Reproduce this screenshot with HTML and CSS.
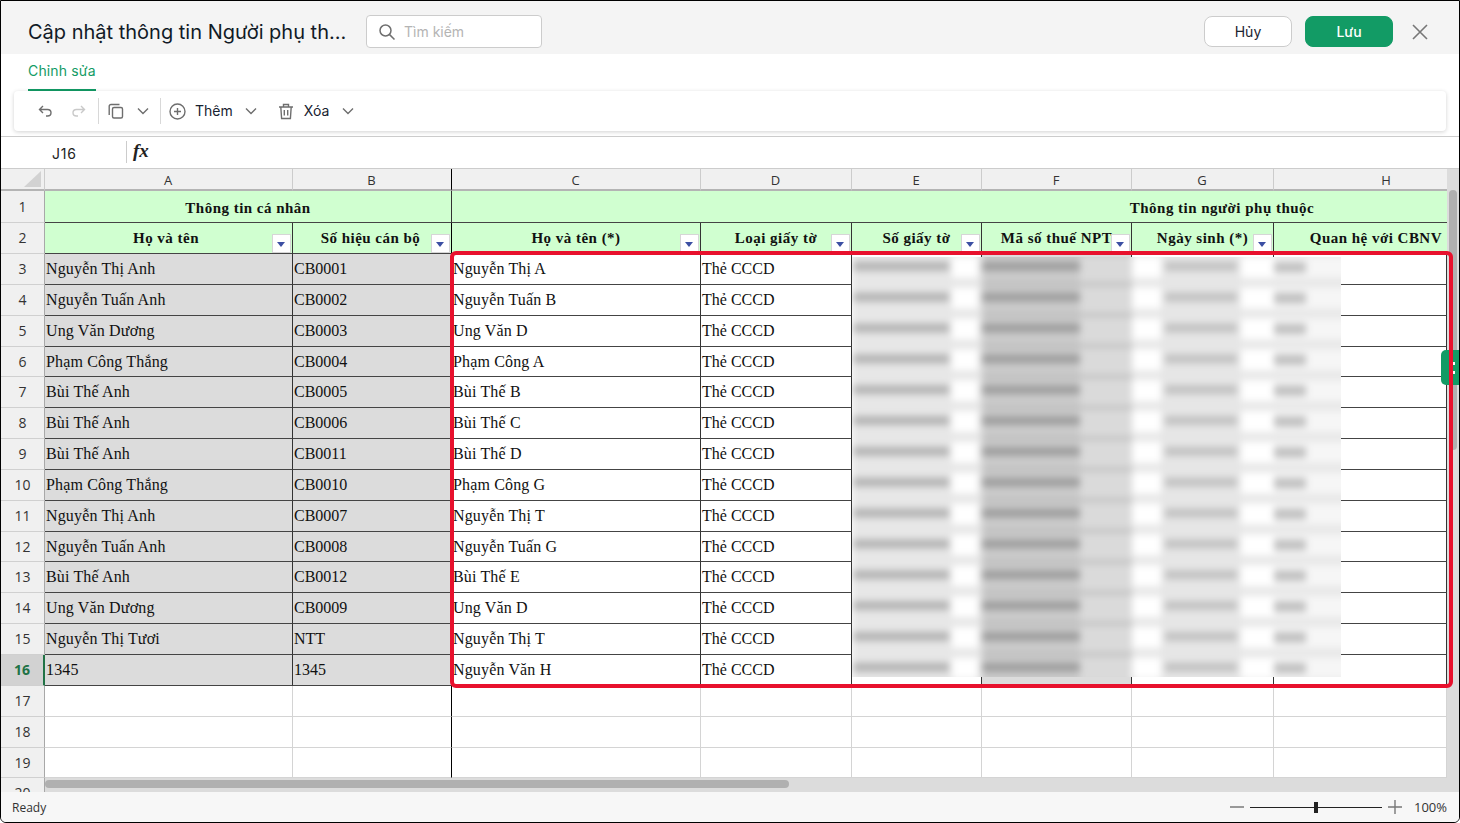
FILE: index.html
```html
<!DOCTYPE html>
<html lang="vi">
<head>
    <meta charset="utf-8" />
    <title>Cập nhật thông tin Người phụ thuộc</title>
    <link rel="stylesheet" href="styles.css">
</head>
<body>
<div class="app">
    <div class="topbar">
        <div class="title">Cập nhật thông tin Người phụ th...</div>
        <div class="search">
            <svg class="search-icon" width="18" height="18" viewBox="0 0 18 18"><circle cx="7.5" cy="7.5" r="5.5"/><path d="M11.6 11.6L16.5 16.5"/></svg>
            <span>Tìm kiếm</span>
        </div>
        <div class="topbar-actions">
            <div class="btn">Hủy</div>
            <div class="btn btn-save">Lưu</div>
            <svg class="close" width="16" height="16" viewBox="0 0 16 16"><path d="M1 1L15 15M15 1L1 15"/></svg>
        </div>
    </div>

    <div class="tabs"><div class="tab">Chỉnh sửa</div></div>

    <div class="toolbar-wrap">
        <div class="toolbar">
            <svg class="ico ico-undo" width="16" height="16" viewBox="0 0 16 16"><path d="M6 3L2.5 6.5L6 10M2.5 6.5H10.5C12.6 6.5 14 8 14 9.8C14 11.6 12.6 13 10.5 13H9"/></svg>
            <svg class="ico ico-redo" width="16" height="16" viewBox="0 0 16 16"><path d="M10 3L13.5 6.5L10 10M13.5 6.5H5.5C3.4 6.5 2 8 2 9.8C2 11.6 3.4 13 5.5 13H7"/></svg>
            <i class="sep"></i>
            <svg class="ico ico-copy" width="16" height="16" viewBox="0 0 16 16"><rect x="4.5" y="4.5" width="10" height="10.5" rx="1.5"/><path d="M11.5 1.5H3C2 1.5 1.2 2.3 1.2 3.3V12"/></svg>
            <svg class="ico chev chev-copy" width="12" height="12" viewBox="0 0 12 12"><path d="M1 3.5L6 8.5L11 3.5"/></svg>
            <i class="sep sep-2"></i>
            <svg class="ico ico-plus" width="17" height="17" viewBox="0 0 17 17"><circle cx="8.5" cy="8.5" r="7.5"/><path d="M8.5 5V12M5 8.5H12"/></svg>
            <span class="tool-label">Thêm</span>
            <svg class="ico chev chev-add" width="12" height="12" viewBox="0 0 12 12"><path d="M1 3.5L6 8.5L11 3.5"/></svg>
            <svg class="ico ico-trash" width="16" height="17" viewBox="0 0 16 17"><path d="M1 4H15M5.5 4V1.5H10.5V4M2.8 4L3.6 15.5H12.4L13.2 4M6.3 7V12.5M9.7 7V12.5"/></svg>
            <span class="tool-label">Xóa</span>
            <svg class="ico chev chev-del" width="12" height="12" viewBox="0 0 12 12"><path d="M1 3.5L6 8.5L11 3.5"/></svg>
        </div>
    </div>

    <div class="formula">
        <div class="cell-name">J16</div>
        <div class="fx">fx</div>
    </div>

    <div class="sheet">
        <div class="sheet-main">
            <table class="grid">
                <colgroup>
                    <col class="c-rh"><col class="c-a"><col class="c-b"><col class="c-c"><col class="c-d"><col class="c-e"><col class="c-f"><col class="c-g"><col class="c-h">
                </colgroup>
                <tr class="r-cols">
                    <th class="corner"><i></i></th><th>A</th><th class="freeze">B</th><th>C</th><th>D</th><th>E</th><th>F</th><th>G</th><th class="col-h">H</th>
                </tr>
                <tr class="r-32">
                    <td class="rh">1</td>
                    <td class="head head-top" colspan="2">Thông tin cá nhân</td>
                    <td class="head head-top head-dep" colspan="6">Thông tin người phụ thuộc</td>
                </tr>
                <tr>
                    <td class="rh">2</td>
                    <td class="head head-a">Họ và tên<b class="filter"></b></td>
                    <td class="head head-b">Số hiệu cán bộ<b class="filter"></b></td>
                    <td class="head">Họ và tên (*)<b class="filter"></b></td>
                    <td class="head">Loại giấy tờ<b class="filter"></b></td>
                    <td class="head">Số giấy tờ<b class="filter"></b></td>
                    <td class="head head-f">Mã số thuế NPT<b class="filter"></b></td>
                    <td class="head">Ngày sinh (*)<b class="filter"></b></td>
                    <td class="head head-h">Quan hệ với CBNV</td>
                </tr>
                <tr><td class="rh">3</td><td class="g">Nguyễn Thị Anh</td><td class="g">CB0001</td><td>Nguyễn Thị A</td><td>Thẻ CCCD</td><td></td><td class="g"></td><td></td><td></td></tr>
                <tr><td class="rh">4</td><td class="g">Nguyễn Tuấn Anh</td><td class="g">CB0002</td><td>Nguyễn Tuấn B</td><td>Thẻ CCCD</td><td></td><td class="g"></td><td></td><td></td></tr>
                <tr><td class="rh">5</td><td class="g">Ung Văn Dương</td><td class="g">CB0003</td><td>Ung Văn D</td><td>Thẻ CCCD</td><td></td><td class="g"></td><td></td><td></td></tr>
                <tr class="r-30"><td class="rh">6</td><td class="g">Phạm Công Thắng</td><td class="g">CB0004</td><td>Phạm Công A</td><td>Thẻ CCCD</td><td></td><td class="g"></td><td></td><td></td></tr>
                <tr><td class="rh">7</td><td class="g">Bùi Thế Anh</td><td class="g">CB0005</td><td>Bùi Thế B</td><td>Thẻ CCCD</td><td></td><td class="g"></td><td></td><td></td></tr>
                <tr><td class="rh">8</td><td class="g">Bùi Thế Anh</td><td class="g">CB0006</td><td>Bùi Thế C</td><td>Thẻ CCCD</td><td></td><td class="g"></td><td></td><td></td></tr>
                <tr><td class="rh">9</td><td class="g">Bùi Thế Anh</td><td class="g">CB0011</td><td>Bùi Thế D</td><td>Thẻ CCCD</td><td></td><td class="g"></td><td></td><td></td></tr>
                <tr><td class="rh">10</td><td class="g">Phạm Công Thắng</td><td class="g">CB0010</td><td>Phạm Công G</td><td>Thẻ CCCD</td><td></td><td class="g"></td><td></td><td></td></tr>
                <tr><td class="rh">11</td><td class="g">Nguyễn Thị Anh</td><td class="g">CB0007</td><td>Nguyễn Thị T</td><td>Thẻ CCCD</td><td></td><td class="g"></td><td></td><td></td></tr>
                <tr class="r-30"><td class="rh">12</td><td class="g">Nguyễn Tuấn Anh</td><td class="g">CB0008</td><td>Nguyễn Tuấn G</td><td>Thẻ CCCD</td><td></td><td class="g"></td><td></td><td></td></tr>
                <tr><td class="rh">13</td><td class="g">Bùi Thế Anh</td><td class="g">CB0012</td><td>Bùi Thế E</td><td>Thẻ CCCD</td><td></td><td class="g"></td><td></td><td></td></tr>
                <tr><td class="rh">14</td><td class="g">Ung Văn Dương</td><td class="g">CB0009</td><td>Ung Văn D</td><td>Thẻ CCCD</td><td></td><td class="g"></td><td></td><td></td></tr>
                <tr><td class="rh">15</td><td class="g">Nguyễn Thị Tươi</td><td class="g">NTT</td><td>Nguyễn Thị T</td><td>Thẻ CCCD</td><td></td><td class="g"></td><td></td><td></td></tr>
                <tr><td class="rh rh-active">16</td><td class="g">1345</td><td class="g">1345</td><td>Nguyễn Văn H</td><td>Thẻ CCCD</td><td></td><td class="g"></td><td></td><td></td></tr>
                <tr class="empty"><td class="rh">17</td><td></td><td></td><td></td><td></td><td></td><td></td><td></td><td></td></tr>
                <tr class="empty"><td class="rh">18</td><td></td><td></td><td></td><td></td><td></td><td></td><td></td><td></td></tr>
                <tr class="empty r-30"><td class="rh">19</td><td></td><td></td><td></td><td></td><td></td><td></td><td></td><td></td></tr>
            </table>
            <div class="vbar"><i></i></div>

            <div class="blur-box">
                <div class="blur-in">
                    <div class="bl bl-e"></div>
                    <div class="bl bl-f"></div>
                    <div class="bl bl-g"></div>
                    <div class="bl bl-h"></div>
                </div>
            </div>
            <div class="side-tab"><i></i><i></i></div>
            <div class="red-frame"></div>
        </div>
        <div class="hbar">
            <div class="hbar-rh"><span>20</span></div>
            <div class="hbar-track"><i></i></div>
        </div>
    </div>

    <div class="status">
        <span>Ready</span>
        <div class="zoom">
            <i class="zoom-minus"></i>
            <div class="zoom-track"><i></i></div>
            <svg class="zoom-plus" width="14" height="14" viewBox="0 0 14 14"><path d="M0 7H14M7 0V14"/></svg>
            <span class="zoom-val">100%</span>
        </div>
    </div>
</div>
</body>
</html>
```

FILE: styles.css
```css
* {box-sizing:border-box}
body {margin:0; background:#fff; font-family:Inter, "Noto Sans", sans-serif; color:#1c2430}
.app {width:1460px; height:823px; border:1px solid #000; border-radius:0 0 6px 6px; overflow:hidden; display:flex; flex-direction:column; background:#fff}

/* top bar */
.topbar {height:53px; flex:none; background:#f4f4f4; display:flex; align-items:center; padding:8px 31px 0 27px}
.title {width:338px; font-size:20px; white-space:nowrap; color:#111a26}
.search {width:176px; height:33px; background:#fff; border:1px solid #ccc; border-radius:4px; display:flex; align-items:center; padding-left:11px; gap:8px; font-size:14px; color:#b4b4b4}
.search-icon {fill:none; stroke:#6f6f6f; stroke-width:1.5}
.topbar-actions {margin-left:auto; display:flex; align-items:center; gap:13px}
.btn {width:88px; height:31px; background:#fff; border:1px solid #ccc; border-radius:8px; display:flex; align-items:center; justify-content:center; font-size:14px}
.btn-save {background:#129b65; border-color:#129b65; color:#fff; font-weight:500}
.close {margin-left:6px; fill:none; stroke:#777; stroke-width:1.6}

/* tab */
.tabs {height:37px; flex:none; padding-left:27px; display:flex; background:#fff}
.tab {width:68px; color:#129b65; font-size:14px; letter-spacing:.15px; white-space:nowrap; border-bottom:2px solid #129b65; padding-top:8px}

/* toolbar */
.toolbar-wrap {height:46px; flex:none; padding:0 13px; border-bottom:1px solid #ccc}
.toolbar {height:40px; background:#fff; border-radius:4px; box-shadow:0 1px 4px rgba(0,0,0,.18); display:flex; align-items:center; padding-left:23px; font-size:14px}
.ico {flex:none; fill:none; stroke:#6e6e6e; stroke-width:1.4}
.ico-redo {margin-left:18px; stroke:#c9c9c9}
.sep {width:1px; height:26px; background:#d8d8d8; margin-left:11px}
.ico-copy {margin-left:9px}
.chev-copy {margin-left:13px}
.sep-2 {margin-left:11px}
.ico-plus {margin-left:8px}
.tool-label {margin-left:9px; margin-bottom:2px; color:#172230}
.chev-add {margin-left:12px}
.ico-trash {margin-left:21px}
.ico-trash + .tool-label {margin-left:10px}
.chev-del {margin-left:13px}

/* formula bar */
.formula {height:32px; flex:none; display:flex; border-bottom:1px solid #ccc; background:#fff}
.cell-name {width:125px; padding:8px 0 0 51px; font-size:14px; letter-spacing:.8px; color:#222}
.fx {height:22px; margin-top:4px; border-left:1px solid #ccc; padding-left:6px; font:italic bold 19px/20px "Liberation Serif", serif; color:#222}

/* sheet */
.sheet {height:623px; flex:none; display:flex; flex-direction:column; overflow:hidden}
.sheet-main {height:609px; flex:none; display:flex; position:relative}
.grid {width:1446px; table-layout:fixed; border-collapse:separate; border-spacing:0; font:16px/1 "Liberation Serif", serif; color:#111}
.c-rh {width:44px}
.c-a {width:248px}
.c-b {width:159px}
.c-c {width:249px}
.c-d {width:151px}
.c-e {width:130px}
.c-f {width:150px}
.c-g {width:142px}
.c-h {width:173px}
.grid tr {height:31px}
.grid tr.r-cols {height:22px}
.grid tr.r-32 {height:32px}
.grid tr.r-30 {height:30px}
.grid th {height:22px; background:#f0f0f0; border-right:1px solid #ccc; border-bottom:2px solid #b4b4b4; font:400 13px/1 "Open Sans", sans-serif; color:#333; padding:2px 1px 0 0}
.grid th.freeze {border-right-color:#000}
.grid th.col-h {border-right:0; padding-left:52px}
.corner {position:relative}
.corner i {position:absolute; right:3px; bottom:2px; width:0; height:0; border-style:solid; border-width:0 0 16px 17px; border-color:transparent transparent #d2d2d2 transparent}
.grid td {padding:0 1px; white-space:nowrap; overflow:hidden; border-right:1px solid #333; border-bottom:1px solid #444; vertical-align:middle}
.grid td:nth-child(2), .grid td:nth-child(4) {letter-spacing:.15px}
.grid td:nth-child(3) {border-right-color:#000}
.grid td.rh {background:#f0f0f0; border-right:1px solid #a8a8a8; border-bottom:1px solid #d0d0d0; text-align:center; font:14px/1 "Open Sans", sans-serif; letter-spacing:0; color:#333}
.grid td.rh-active {background:#d2d2d2; color:#217346; font-weight:700; border-right:2px solid #217346}
.grid td.g {background:#dcdcdc}
.grid td.head {position:relative; background:#d0ffd0; text-align:center; font-weight:700; font-size:15px; letter-spacing:.48px; overflow:visible}
.grid td.head-top {padding-top:3px}
.grid td.head-a {padding-right:6px}
.grid td.head-b {padding-right:4px}
.grid td.head-dep {padding-left:546px; border-right:0}
.grid td.head-h {text-align:right; padding-right:5px; border-right:0}
.grid tr.empty td {border-right-color:#d4d4d4; border-bottom-color:#d4d4d4}
.grid tr.empty td:nth-child(3) {border-right-color:#000}
.grid tr.empty td.rh {border-right-color:#a8a8a8; border-bottom-color:#d0d0d0}
.filter {position:absolute; right:1px; bottom:0; width:19px; height:19px; background:#fff; border:1px solid #d6d6d6}
.filter::after {content:""; position:absolute; left:4px; top:7px; width:0; height:0; border-style:solid; border-width:5px 4.5px 0 4.5px; border-color:#3c4fa3 transparent transparent transparent}

/* scrollbars */
.vbar {width:12px; flex:none; background:#dcdcdc; padding:21px 0 0 2px}
.vbar i {display:block; width:8px; height:260px; border-radius:4px; background:#b0b0b0}
.hbar {height:14px; flex:none; display:flex}
.hbar-rh {width:44px; flex:none; background:#f0f0f0; border-right:1px solid #a8a8a8; overflow:hidden; text-align:center; font:14px/1 "Open Sans", sans-serif; color:#333; padding-top:8px}
.hbar-track {flex:1; background:#dcdcdc; padding-top:2px}
.hbar-track i {display:block; width:744px; height:8px; border-radius:4px; background:#b0b0b0}

/* overlays on the sheet */
.blur-box {position:absolute; left:851px; top:88px; width:489px; height:420px; overflow:hidden; background:#fff}
.blur-in {display:flex; margin-top:-30.85px; height:490px; width:510px; filter:blur(3.5px)}
.bl {flex:none; height:100%; background-size:100% 30.85px}
.bl-e {width:130px; background-color:#e7e7e7; background-repeat:repeat-y;
    background-image:linear-gradient(to bottom, transparent 5px, #b4b4b4 5px, #b4b4b4 14px, transparent 14px), linear-gradient(to bottom, #fff 21px, transparent 21px);
    background-size:96px 30.85px, 26px 30.85px; background-position:1px 0, 100px 0}
.bl-f {width:150px; background-color:#dadada; background-repeat:repeat-y;
    background-image:linear-gradient(to bottom, transparent 5px, #9e9e9e 5px, #9e9e9e 14px, transparent 14px), linear-gradient(to bottom, transparent 26px, #b8b8b8 26px, #b8b8b8 29px, transparent 29px), linear-gradient(#cbcbcb, #cbcbcb);
    background-size:98px 30.85px, 150px 30.85px, 98px 30.85px; background-position:0 0, 0 0, 0 0}
.bl-g {width:142px; background-color:#fff; background-repeat:repeat-y;
    background-image:linear-gradient(to bottom, transparent 5px, #c2c2c2 5px, #c2c2c2 14px, transparent 14px), linear-gradient(#e6e6e6, #e6e6e6), linear-gradient(to bottom, transparent 21px, #e8e8e8 21px);
    background-size:72px 30.85px, 80px 30.85px, 142px 30.85px; background-position:33px 0, 29px 0, 0 0}
.bl-h {width:88px; background-color:#f6f6f6; background-repeat:repeat-y;
    background-image:linear-gradient(to bottom, transparent 5px, #c2c2c2 5px, #c2c2c2 16px, transparent 16px), linear-gradient(to bottom, transparent 21px, #e8e8e8 21px);
    background-size:32px 30.85px, 88px 30.85px; background-position:0 0, 0 0}
.red-frame {position:absolute; left:449px; top:82px; width:1003px; height:437px; border:4px solid #e8112d; border-radius:6px; pointer-events:none}
.side-tab {position:absolute; left:1440px; top:181px; width:18px; height:35px; background:#129b65; border-radius:5px 0 0 5px; display:flex; flex-direction:column; align-items:flex-end; justify-content:center; gap:6px; padding-right:4px}
.side-tab i {width:3px; height:3px; background:#fff}

/* status bar */
.status {flex:1; background:#f7f7f7; display:flex; align-items:center; justify-content:space-between; padding:0 12px 0 11px; font:12px "Open Sans", sans-serif; color:#333}
.zoom {display:flex; align-items:center}
.zoom-minus {width:14px; height:2px; background:#999}
.zoom-track {width:132px; height:1px; margin:0 6px; background:#222; position:relative}
.zoom-track i {position:absolute; left:64px; top:-5px; width:4px; height:11px; background:#222}
.zoom-plus {fill:none; stroke:#777; stroke-width:1.4}
.zoom-val {margin-left:12px; font-size:13px}
```
